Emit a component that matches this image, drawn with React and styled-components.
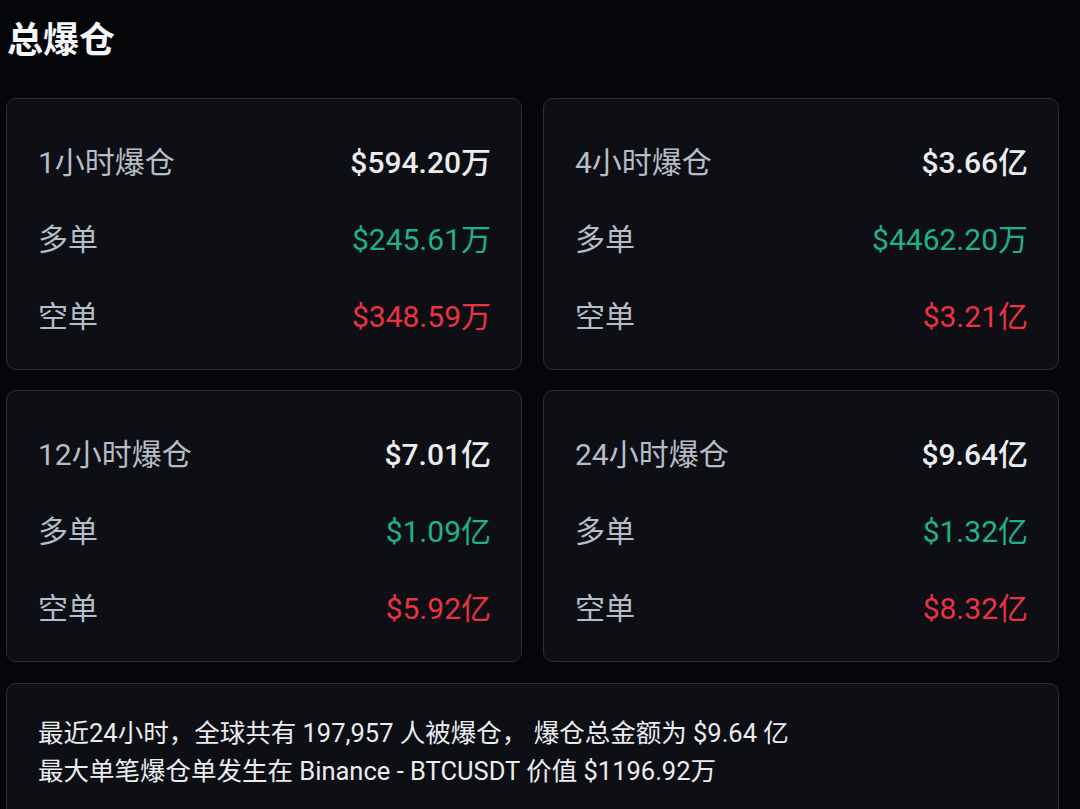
import React from "react";
import styled, { createGlobalStyle } from "styled-components";

const GlobalStyle = createGlobalStyle`
  html, body {
    margin: 0;
    padding: 0;
    background: #05060a;
  }
  body {
    font-family: Roboto, "Noto Sans CJK SC", "Noto Sans", sans-serif;
    color: #eaecef;
  }
`;

const Page = styled.div`
  padding: 0 21px 0 6px;
  width: 1080px;
  box-sizing: border-box;
  height: 809px;
  overflow: hidden;
`;

const Title = styled.h1`
  margin: 0;
  padding: 19px 0 0 1px;
  height: 98px;
  box-sizing: border-box;
  font-size: 36px;
  line-height: 44px;
  font-weight: 700;
  color: #f5f6f7;
`;

const Grid = styled.div`
  display: grid;
  grid-template-columns: 516px 516px;
  column-gap: 21px;
  row-gap: 20px;
`;

const Card = styled.div`
  background: #0d0f14;
  border: 1.5px solid #2b2f36;
  border-radius: 10px;
  box-sizing: border-box;
  height: 272px;
  padding: 41px 30px 0 31px;
  display: flex;
  flex-direction: column;
  gap: 37px;
`;

const Row = styled.div`
  display: flex;
  justify-content: space-between;
  align-items: center;
  height: 40px;
  font-size: 30px;
`;

const Label = styled.span`
  color: #b7bdc6;
`;

const Value = styled.span`
  color: ${(p) =>
    p.$tone === "up" ? "#20b18a" : p.$tone === "down" ? "#ec3344" : "#eaecef"};
  font-weight: ${(p) => (p.$tone ? 400 : 500)};
`;

const Summary = styled.div`
  margin-top: 21px;
  background: #0d0f14;
  border: 1.5px solid #2b2f36;
  border-radius: 10px;
  box-sizing: border-box;
  height: 160px;
  padding: 30px 31px;
  font-size: 25.5px;
  line-height: 38px;
  color: #eaecef;
`;

const data = [
  { label: "1小时爆仓", total: "$594.20万", long: "$245.61万", short: "$348.59万" },
  { label: "4小时爆仓", total: "$3.66亿", long: "$4462.20万", short: "$3.21亿" },
  { label: "12小时爆仓", total: "$7.01亿", long: "$1.09亿", short: "$5.92亿" },
  { label: "24小时爆仓", total: "$9.64亿", long: "$1.32亿", short: "$8.32亿" },
];

export default function App() {
  return (
    <Page>
      <GlobalStyle />
      <Title>总爆仓</Title>
      <Grid>
        {data.map((d) => (
          <Card key={d.label}>
            <Row>
              <Label>{d.label}</Label>
              <Value>{d.total}</Value>
            </Row>
            <Row>
              <Label>多单</Label>
              <Value $tone="up">{d.long}</Value>
            </Row>
            <Row>
              <Label>空单</Label>
              <Value $tone="down">{d.short}</Value>
            </Row>
          </Card>
        ))}
      </Grid>
      <Summary>
        <div>最近24小时，全球共有 197,957 人被爆仓， 爆仓总金额为 $9.64 亿</div>
        <div>最大单笔爆仓单发生在 Binance - BTCUSDT 价值 $1196.92万</div>
      </Summary>
    </Page>
  );
}
